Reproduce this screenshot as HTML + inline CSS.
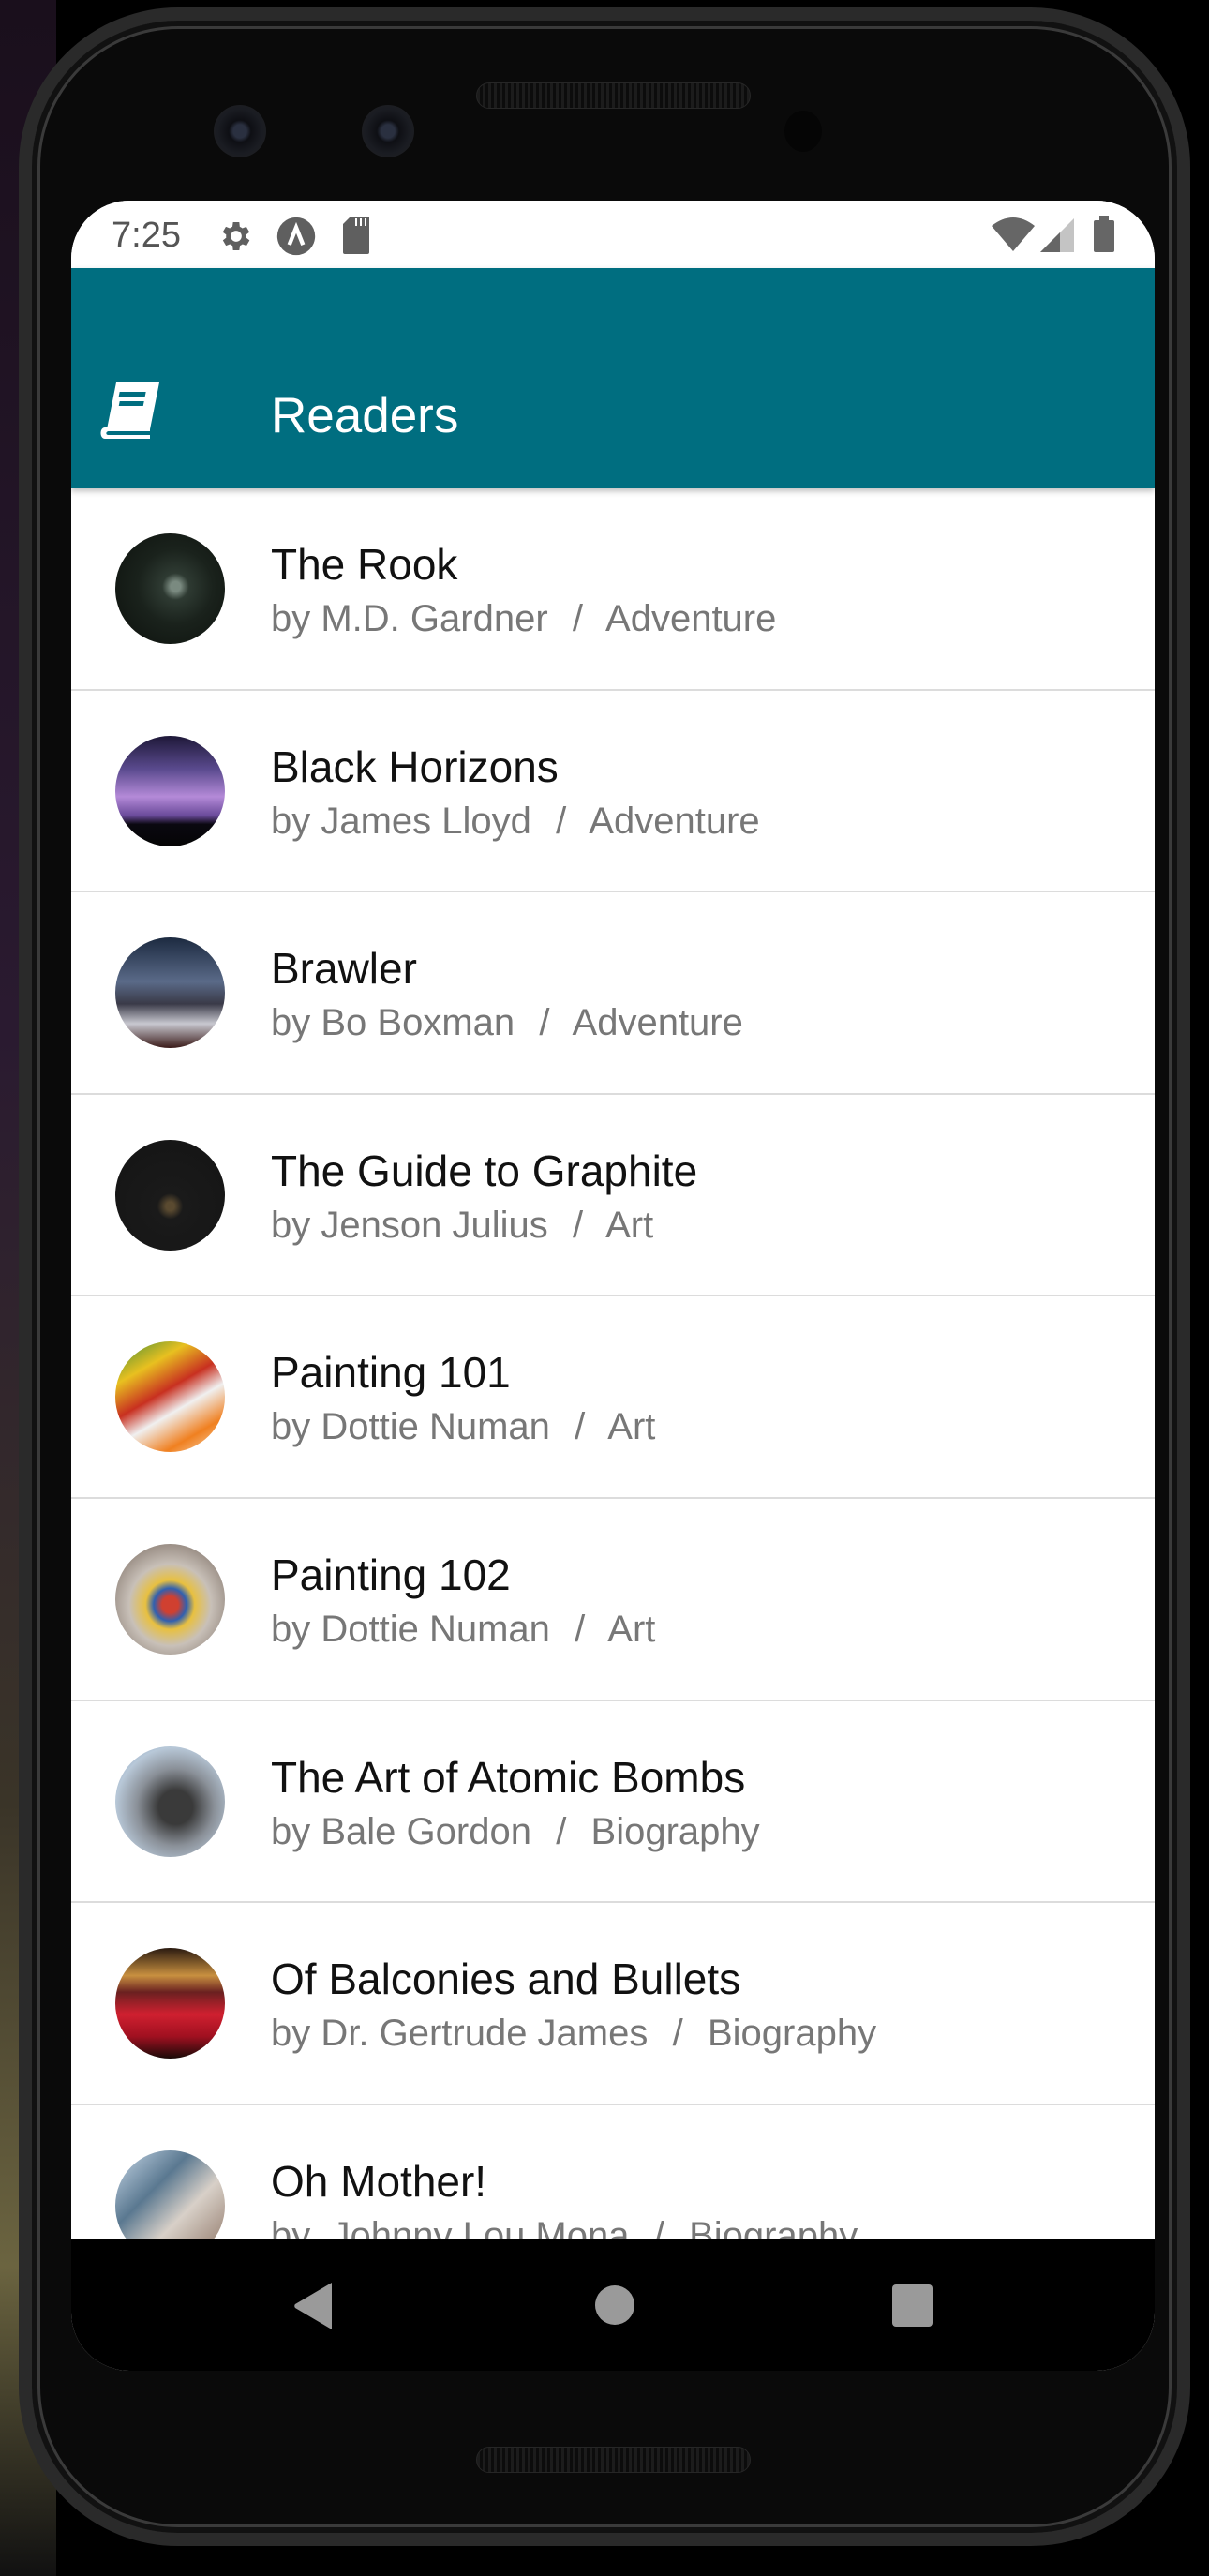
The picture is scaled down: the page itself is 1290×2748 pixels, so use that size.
<!DOCTYPE html>
<html><head><meta charset="utf-8"><style>
*{margin:0;padding:0;box-sizing:border-box}
html,body{width:1290px;height:2748px;overflow:hidden;background:#000;font-family:"Liberation Sans",Arial,sans-serif}
.bg{position:absolute;left:0;top:0;width:60px;height:2748px;background:linear-gradient(180deg,#1a0f1c 0%,#2a1a30 40%,#3a3428 70%,#6b6440 88%,#111 100%)}
.phone{position:absolute;left:20px;top:8px;width:1250px;height:2708px;border-radius:170px;background:#0a0a0a;border:14px solid #2a2a2a;box-shadow:inset 0 0 0 6px #111,inset 0 0 0 9px #3a3a3a}
.cam{position:absolute;border-radius:50%;background:radial-gradient(circle,#2a3040 0 18%,#0e0f14 30%,#1a1c22 60%,#222 100%)}
.spk{position:absolute;left:508px;top:88px;width:293px;height:28px;border-radius:14px;background:repeating-linear-gradient(90deg,#1c1c1c 0 3px,#0c0c0c 3px 6px);border:1px solid #262626}
.screen{position:absolute;left:76px;top:214px;width:1156px;height:2315px;background:#fff;border-radius:62px 62px 62px 62px;overflow:hidden}
.status{position:absolute;left:0;top:0;width:1156px;height:72px;background:#fff}
.time{position:absolute;left:43px;top:16px;font-size:38px;color:#555}
.appbar{position:absolute;left:0;top:72px;width:1156px;height:235px;background:#006e80;box-shadow:0 3px 6px rgba(0,0,0,.25);z-index:2}
.title{position:absolute;left:213px;top:127px;font-size:53px;color:#fff}
.row{position:absolute;left:0;width:1156px;height:215.6px;border-bottom:2px solid #dcdcdc}
.av{position:absolute;left:47px;top:48px;width:117px;height:118px;border-radius:50%}
.t{position:absolute;left:213px;top:54px;font-size:46px;color:#111;white-space:pre}
.s{position:absolute;left:213px;top:117px;font-size:40px;color:#777;white-space:pre}
.s i{font-style:normal;margin:0 4px}
.nav{position:absolute;left:0;top:2174px;width:1156px;height:141px;background:#000}
</style></head><body>
<div class="bg"></div>
<div class="phone"></div>
<div class="cam" style="left:228px;top:112px;width:56px;height:56px"></div>
<div class="cam" style="left:386px;top:112px;width:56px;height:56px"></div>
<div class="cam" style="left:837px;top:118px;width:40px;height:44px;background:#050505"></div>
<div class="spk"></div>
<div class="spk" style="top:2610px"></div>
<div class="screen">
 <div class="status">
  <div class="time">7:25</div>
  <svg style="position:absolute;left:156px;top:18px" width="40" height="40" viewBox="0 0 24 24"><path fill="#5f5f5f" d="M19.4 13a7.5 7.5 0 0 0 0-2l2.1-1.6-2-3.5-2.5 1a7 7 0 0 0-1.7-1L15 3h-4l-.4 2.9a7 7 0 0 0-1.7 1l-2.5-1-2 3.5L6.6 11a7.5 7.5 0 0 0 0 2l-2.1 1.6 2 3.5 2.5-1a7 7 0 0 0 1.7 1L11 21h4l.4-2.9a7 7 0 0 0 1.7-1l2.5 1 2-3.5zM13 15.5a3.5 3.5 0 1 1 0-7 3.5 3.5 0 0 1 0 7z" transform="translate(-1 0)"/></svg>
  <svg style="position:absolute;left:218px;top:16px" width="44" height="44" viewBox="0 0 24 24"><circle cx="12" cy="12" r="11" fill="#5f5f5f"/><path d="M8 17l4-10 4 10" stroke="#fff" stroke-width="2.4" fill="none"/></svg>
  <svg style="position:absolute;left:290px;top:17px" width="30" height="40" viewBox="0 0 15 20"><path fill="#5f5f5f" d="M4 0h10v19a1 1 0 0 1-1 1H1a1 1 0 0 1-1-1V4z"/><path stroke="#fff" stroke-width="1" d="M7 1v4M9.5 1v4M12 1v4"/></svg>
  <svg style="position:absolute;left:982px;top:17px" width="46" height="37" viewBox="0 0 46 37"><path fill="#666" d="M0 10Q23-8 46 10L23 37z"/></svg>
  <svg style="position:absolute;left:1034px;top:19px" width="36" height="36" viewBox="0 0 36 36"><path fill="#c4c4c4" d="M36 0V36H0z"/><path fill="#666" d="M21 15V36H0z"/></svg>
  <div style="position:absolute;left:1091px;top:21px;width:22px;height:34px;background:#666;border-radius:2px"></div>
  <div style="position:absolute;left:1097px;top:16px;width:10px;height:6px;background:#666"></div>
 </div>
 <div class="appbar">
  <svg style="position:absolute;left:30px;top:120px" width="68" height="62" viewBox="0 0 68 62"><path fill="#fff" d="M18 2h46l-10 50H8z"/><path fill="#fff" d="M6 50h48v4H10c-3 0-4 4 0 4h44v4H6c-6 0-6-12 0-12z"/><rect x="24" y="12" width="28" height="5" fill="#006e80" transform="skewX(-11)"/><rect x="26" y="22" width="26" height="5" fill="#006e80" transform="skewX(-11)"/></svg>
  <div class="title">Readers</div>
 </div>
 <div class="row" style="top:307px"><div class="av" style="background:radial-gradient(circle at 55% 48%,#7a8a80 0 6%,#2e3a32 16%,#1a221c 45%,#0c100c 100%)"></div><div class="t">The Rook</div><div class="s">by M.D. Gardner  <i>/</i>  Adventure</div></div>
 <div class="row" style="top:522.6px"><div class="av" style="background:linear-gradient(180deg,#1e1838 0%,#5a4a8e 30%,#b48ad8 55%,#6a4a9a 72%,#0a0810 80%,#050505 100%)"></div><div class="t">Black Horizons</div><div class="s">by James Lloyd  <i>/</i>  Adventure</div></div>
 <div class="row" style="top:738.2px"><div class="av" style="background:linear-gradient(180deg,#1c2a40 0%,#5a6a88 40%,#3a3a48 60%,#c8c8d0 78%,#3a1a18 100%)"></div><div class="t">Brawler</div><div class="s">by Bo Boxman  <i>/</i>  Adventure</div></div>
 <div class="row" style="top:953.8px"><div class="av" style="background:radial-gradient(circle at 50% 60%,#5a4a30 0 5%,#1a1a1a 15%,#141414 100%)"></div><div class="t">The Guide to Graphite</div><div class="s">by Jenson Julius  <i>/</i>  Art</div></div>
 <div class="row" style="top:1169.4px"><div class="av" style="background:linear-gradient(150deg,#3a8a3a 0%,#e8c020 25%,#c83020 45%,#f0f0f0 60%,#f08020 80%,#f8e0c0 100%)"></div><div class="t">Painting 101</div><div class="s">by Dottie Numan  <i>/</i>  Art</div></div>
 <div class="row" style="top:1385px"><div class="av" style="background:radial-gradient(circle at 50% 55%,#d04030 0 10%,#3060b0 20%,#e8c040 30%,#c8c0b8 50%,#6a5a50 100%)"></div><div class="t">Painting 102</div><div class="s">by Dottie Numan  <i>/</i>  Art</div></div>
 <div class="row" style="top:1600.6px"><div class="av" style="background:radial-gradient(circle at 55% 55%,#3a3a3a 0 20%,#8a9098 45%,#b8c8d8 70%,#7a98b8 100%)"></div><div class="t">The Art of Atomic Bombs</div><div class="s">by Bale Gordon  <i>/</i>  Biography</div></div>
 <div class="row" style="top:1816.2px"><div class="av" style="background:linear-gradient(180deg,#2a1a10 0%,#c89040 25%,#6a2020 40%,#d02030 60%,#a01020 80%,#1a0a08 100%)"></div><div class="t">Of Balconies and Bullets</div><div class="s">by Dr. Gertrude James  <i>/</i>  Biography</div></div>
 <div class="row" style="top:2031.8px;border:none"><div class="av" style="background:linear-gradient(135deg,#c8d8e8 0%,#5a7890 35%,#d8d0c8 60%,#8a7060 100%)"></div><div class="t">Oh Mother!</div><div class="s">by  Johnny Lou Mona  <i>/</i>  Biography</div></div>
 <div class="nav">
  <svg style="position:absolute;left:237px;top:47px" width="43" height="50" viewBox="0 0 43 50"><path fill="#9a9a9a" d="M41 0V50L2 27a3 3 0 0 1 0-4z"/></svg>
  <div style="position:absolute;left:559px;top:50px;width:42px;height:42px;border-radius:50%;background:#9a9a9a"></div>
  <div style="position:absolute;left:876px;top:49px;width:43px;height:45px;border-radius:4px;background:#9a9a9a"></div>
 </div>
</div>
</body></html>
